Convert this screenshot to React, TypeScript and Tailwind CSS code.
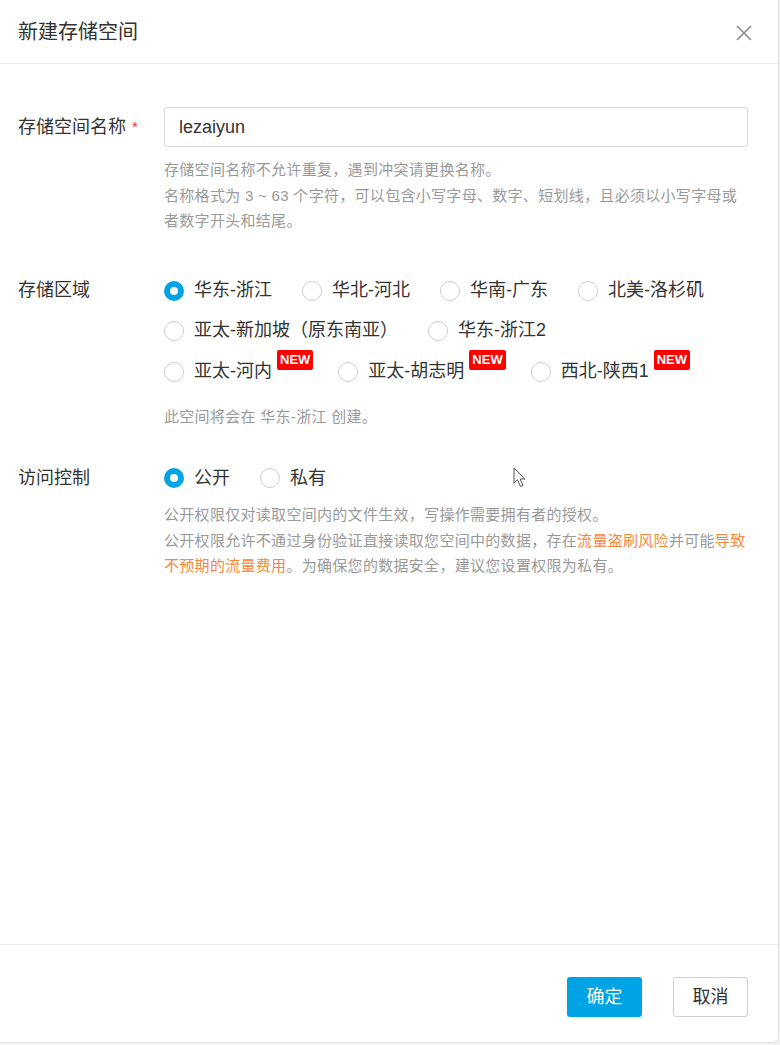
import type { FC, ReactNode } from "react";

const FONT = { fontFamily: '"Liberation Sans", "Noto Sans CJK SC", sans-serif' };

const REGIONS: { rows: { label: string; isNew?: boolean }[] }[] = [
  { rows: [{ label: "华东-浙江" }, { label: "华北-河北" }, { label: "华南-广东" }, { label: "北美-洛杉矶" }] },
  { rows: [{ label: "亚太-新加坡（原东南亚）" }, { label: "华东-浙江2" }] },
  {
    rows: [
      { label: "亚太-河内", isNew: true },
      { label: "亚太-胡志明", isNew: true },
      { label: "西北-陕西1", isNew: true },
    ],
  },
];

const Radio: FC<{ checked?: boolean; label: string; isNew?: boolean }> = ({ checked, label, isNew }) => (
  <label className={`flex h-10 items-center ${isNew ? "mr-[-5px]" : ""}`}>
    {checked ? (
      <span className="flex h-5 w-5 items-center justify-center rounded-full bg-[#00a4e4]">
        <span className="h-[8px] w-[8px] rounded-full bg-white" />
      </span>
    ) : (
      <span className="h-5 w-5 rounded-full border border-[#cfcfcf] bg-white" />
    )}
    <span className="ml-[10px] text-[18px] text-[#333]">{label}</span>
    {isNew && (
      <span className="relative -top-[12px] ml-[5px] rounded-[2px] bg-[#ff0000] px-[3px] text-[13px] leading-[20px] font-bold text-white">
        NEW
      </span>
    )}
  </label>
);

const Field: FC<{ label: string; required?: boolean; children: ReactNode; className?: string }> = ({
  label,
  required,
  children,
  className = "",
}) => (
  <div className={`flex ${className}`}>
    <div className="flex h-10 w-[146px] shrink-0 items-center text-[18px] text-[#333]">
      {label}
      {required && <span className="ml-[6px] text-[15px] text-[#e4393c]">*</span>}
    </div>
    <div className="min-w-0 flex-1">{children}</div>
  </div>
);

const HELP = "whitespace-nowrap text-[15px] leading-[25.5px] tracking-[0.3px] text-[#999]";

export default function App() {
  return (
    <div className="h-[1045px] w-[780px] bg-[#f2f2f2]" style={FONT}>
      <div className="relative flex h-[1043px] w-[779px] flex-col rounded-br-[6px] border-r border-b border-[#e3e3e3] bg-white">
        <div className="flex h-[64px] shrink-0 items-center justify-between border-b border-[#ececec] pr-[26px] pl-[18px]">
          <h1 className="text-[20px] text-[#333]">新建存储空间</h1>
          <svg width="16" height="16" viewBox="0 0 16 16" className="mt-[2px]">
            <path d="M1 1 L15 15 M15 1 L1 15" stroke="#8a8a8a" strokeWidth="1.6" />
          </svg>
        </div>

        <div className="flex-1 px-[18px] pt-[43px]">
          <Field label="存储空间名称" required>
            <div className="flex h-10 w-[584px] items-center rounded-[3px] border border-[#d6d6d6] px-[14px] text-[18px] text-[#333]">
              lezaiyun
            </div>
            <div className={`mt-[10px] ${HELP}`}>
              <p>存储空间名称不允许重复，遇到冲突请更换名称。</p>
              <p>
                名称格式为 3 ~ 63 个字符，可以包含小写字母、数字、短划线，且必须以小写字母或
                <br />
                者数字开头和结尾。
              </p>
            </div>
          </Field>

          <Field label="存储区域" className="mt-[37px]">
            {REGIONS.map((group, i) => (
              <div key={i} className={`flex gap-x-[30px] ${i === 2 ? "mt-[1px]" : ""}`}>
                {group.rows.map((r, j) => (
                  <Radio key={r.label} label={r.label} isNew={r.isNew} checked={i === 0 && j === 0} />
                ))}
              </div>
            ))}
            <p className={`mt-[12px] ${HELP}`}>此空间将会在 华东-浙江 创建。</p>
          </Field>

          <Field label="访问控制" className="mt-[29px]">
            <div className="flex gap-x-[30px]">
              <Radio label="公开" checked />
              <Radio label="私有" />
            </div>
            <div className={`mt-[4px] ${HELP}`}>
              <p>公开权限仅对读取空间内的文件生效，写操作需要拥有者的授权。</p>
              <p>
                公开权限允许不通过身份验证直接读取您空间中的数据，存在
                <span className="text-[#f7873b]">流量盗刷风险</span>并可能
                <span className="text-[#f7873b]">导致</span>
                <br />
                <span className="text-[#f7873b]">不预期的流量费用</span>
                。为确保您的数据安全，建议您设置权限为私有。
              </p>
            </div>
          </Field>
        </div>

        <div className="flex h-[98px] shrink-0 items-start justify-end gap-[31px] border-t border-[#ececec] pt-[32px] pr-[30px]">
          <button
            type="button"
            className="h-10 w-[75px] rounded-[3px] bg-[#00a4e4] text-[18px] text-white"
          >
            确定
          </button>
          <button
            type="button"
            className="h-10 w-[75px] rounded-[3px] border border-[#d0d0d0] bg-white text-[18px] text-[#333]"
          >
            取消
          </button>
        </div>

        <svg width="16" height="22" viewBox="0 0 16 22" className="absolute top-[467px] left-[513px]">
          <path
            d="M1 1 L1 16 L4.5 12.8 L7.5 19.5 L10 18.4 L7.2 12 L12 12 Z"
            fill="#fff"
            stroke="#555"
            strokeWidth="1"
            strokeLinejoin="round"
          />
        </svg>
      </div>
    </div>
  );
}
